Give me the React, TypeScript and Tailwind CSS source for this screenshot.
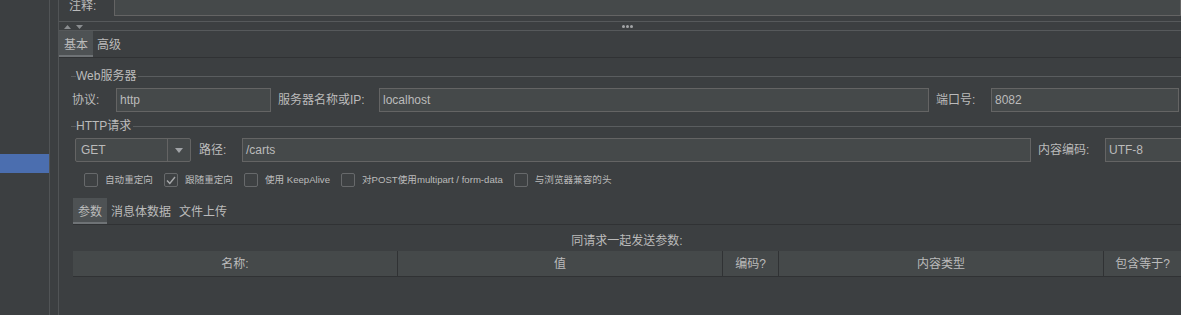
import React from 'react';

const Field: React.FC<{ value?: string; className?: string }> = ({ value, className = '' }) => (
  <div
    className={`h-[24px] border border-[#646464] bg-[#45494a] pl-[3px] flex items-center text-[12px] text-[#bbbbbb] ${className}`}
  >
    {value}
  </div>
);

const Label: React.FC<{ text: string; className?: string }> = ({ text, className = '' }) => (
  <div className={`h-[24px] flex items-center shrink-0 text-[12px] ${className}`}>{text}</div>
);

const GroupTitle: React.FC<{ title: string }> = ({ title }) => (
  <div className="flex items-center h-[14px]">
    <div className="w-[5px] h-px bg-[#5a5d5f]" />
    <span className="pr-[2px] leading-[14px] text-[12px]">{title}</span>
    <div className="flex-1 h-px bg-[#5a5d5f]" />
  </div>
);

const Check: React.FC<{ label: string; checked?: boolean }> = ({ label, checked }) => (
  <div className="flex items-center gap-[7px]">
    <div className="w-[14px] h-[14px] rounded-[2px] border border-[#67696b] bg-[#3e4143] flex items-center justify-center">
      {checked && (
        <svg width="10" height="9" viewBox="0 0 10 9">
          <polyline points="1,4.5 3.8,7.5 9,1" fill="none" stroke="#a7a9ab" strokeWidth="1.4" />
        </svg>
      )}
    </div>
    <span className="text-[9.6px] leading-[14px]">{label}</span>
  </div>
);

const Tab: React.FC<{ text: string; active?: boolean }> = ({ text, active }) => (
  <div className={`flex flex-col h-full ${active ? 'bg-[#4e5254]' : ''}`}>
    <div className={`flex-1 flex items-center pt-[3px] ${active ? 'px-[5px]' : 'px-[4px]'}`}>{text}</div>
    <div className={`h-[2px] ${active ? 'bg-[#6f7376]' : ''}`} />
  </div>
);

export default function App() {
  return (
    <div className="w-[1181px] h-[315px] overflow-hidden bg-[#3c3f41] text-[#bbbbbb] text-[12px] flex font-['Liberation_Sans','Noto_Sans_CJK_SC',sans-serif]">
      {/* tree sidebar */}
      <div className="w-[50px] shrink-0 h-full border-r border-[#515456] flex flex-col">
        <div className="h-[154px]" />
        <div className="h-[19px] bg-[#4b6eaf]" />
      </div>
      <div className="w-[8px] shrink-0" />

      {/* main panel */}
      <div className="flex-1 min-w-0 h-full border-l border-[#515456] flex flex-col">
        {/* comment row */}
        <div className="h-[21px] flex items-start pl-[10px]">
          <div className="w-[45px] shrink-0 leading-[14px] -mt-[1px]">注释:</div>
          <div className="flex-1 h-[16px] border border-t-0 border-[#646464] bg-[#45494a]" />
        </div>

        {/* splitter */}
        <div className="h-[10px] border-y border-[#56595b] flex items-center pl-[5px]">
          <svg width="7" height="4" viewBox="0 0 7 4" className="mt-[1px]">
            <polygon points="0,4 3.5,0 7,4" fill="#8a8d90" />
          </svg>
          <svg width="7" height="4" viewBox="0 0 7 4" className="ml-[5px] mt-[1px]">
            <polygon points="0,0 7,0 3.5,4" fill="#8a8d90" />
          </svg>
          <div className="ml-[539px] flex gap-[1px]">
            <div className="w-[3px] h-[3px] rounded-full bg-[#a3a5a7]" />
            <div className="w-[3px] h-[3px] rounded-full bg-[#a3a5a7]" />
            <div className="w-[3px] h-[3px] rounded-full bg-[#a3a5a7]" />
          </div>
        </div>

        {/* basic / advanced tabs */}
        <div className="h-[27px] border-b border-[#303234] flex">
          <Tab text="基本" active />
          <Tab text="高级" />
        </div>

        <div className="pl-[12px] flex flex-col">
          {/* web server */}
          <div className="mt-[11px]">
            <GroupTitle title="Web服务器" />
          </div>
          <div className="mt-[5px] flex pr-[2px]">
            <Label text="协议:" className="w-[45px] pl-[1px]" />
            <Field value="http" className="w-[155px] shrink-0" />
            <Label text="服务器名称或IP:" className="w-[108px] pl-[7px]" />
            <Field value="localhost" className="flex-1" />
            <Label text="端口号:" className="w-[62px] pl-[7px]" />
            <Field value="8082" className="w-[188px] shrink-0" />
          </div>

          {/* http request */}
          <div className="mt-[7px]">
            <GroupTitle title="HTTP请求" />
          </div>
          <div className="mt-[5px] flex">
            <div className="ml-[4px] w-[116px] shrink-0 h-[24px] rounded-[2px] border border-[#646464] bg-[#45494a] flex">
              <div className="flex-1 flex items-center pl-[5px]">GET</div>
              <div className="w-[23px] border-l border-[#646464] flex items-center justify-center">
                <svg width="8" height="5" viewBox="0 0 8 5">
                  <polygon points="0,0 8,0 4,5" fill="#a0a3a6" />
                </svg>
              </div>
            </div>
            <Label text="路径:" className="w-[51px] pl-[8px]" />
            <Field value="/carts" className="flex-1" />
            <Label text="内容编码:" className="w-[74px] pl-[7px]" />
            <Field value="UTF-8" className="w-[76px] shrink-0 border-r-0" />
          </div>

          {/* options */}
          <div className="mt-[11px] ml-[13px] h-[14px] flex items-center gap-[11px]">
            <Check label="自动重定向" />
            <Check label="跟随重定向" checked />
            <Check label="使用 KeepAlive" />
            <Check label="对POST使用multipart / form-data" />
            <Check label="与浏览器兼容的头" />
          </div>

          {/* parameters tabs */}
          <div className="mt-[11px] ml-[2px] flex flex-col">
            <div className="h-[27px] border-b border-[#303234] flex">
              <Tab text="参数" active />
              <Tab text="消息体数据" />
              <Tab text="文件上传" />
            </div>
            <div className="h-[26px] pt-[5px] flex items-center justify-center">同请求一起发送参数:</div>
            <div className="h-[26px] border-b border-[#303234] bg-[#45494a] flex">
              <div className="w-[325px] shrink-0 border-r border-[#303234] flex items-center justify-center">名称:</div>
              <div className="w-[325px] shrink-0 border-r border-[#303234] flex items-center justify-center">值</div>
              <div className="w-[56px] shrink-0 border-r border-[#303234] flex items-center justify-center">编码?</div>
              <div className="w-[325px] shrink-0 border-r border-[#303234] flex items-center justify-center">内容类型</div>
              <div className="flex-1 flex items-center justify-center">包含等于?</div>
            </div>
          </div>
        </div>
      </div>
    </div>
  );
}
